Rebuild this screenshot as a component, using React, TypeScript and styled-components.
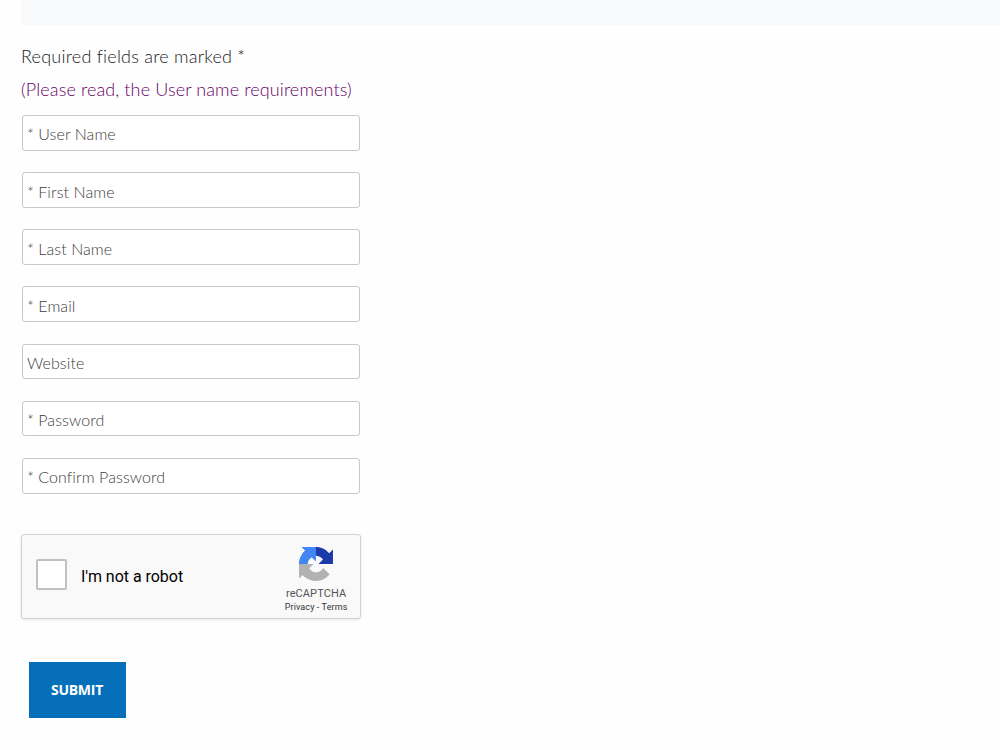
import React from "react";
import styled, { createGlobalStyle } from "styled-components";

const GlobalStyle = createGlobalStyle`
  body {
    margin: 0;
    background: #fefefe;
    font-family: Lato, "Open Sans", sans-serif;
    font-weight: 300;
    color: #3c3c3c;
  }
`;

const Page = styled.main`
  padding-left: 21px;
`;

const Banner = styled.div`
  height: 25px;
  background: #f7f9fb;
`;

const Form = styled.form`
  display: flex;
  flex-direction: column;
  align-items: flex-start;
  padding-top: 15px;
`;

const Note = styled.p<{ $accent?: boolean }>`
  margin: 0;
  height: 33px;
  line-height: 33px;
  font-size: 18px;
  white-space: nowrap;
  letter-spacing: ${(p) => (p.$accent ? "0.12px" : "0.23px")};
  color: ${(p) => (p.$accent ? "#660066" : "#1c1c1c")};
`;

const Fields = styled.div`
  display: flex;
  flex-direction: column;
  gap: 21.5px;
  padding: 9px 0 0 1px;
`;

const Field = styled.input`
  box-sizing: border-box;
  width: 338px;
  height: 35.67px;
  padding: 2.1px 4px 0;
  border: 1px solid #c8c8c8;
  border-radius: 3px;
  background: #fff;
  font: 300 16px Lato, "Open Sans", sans-serif;
  letter-spacing: 0.08px;

  &::placeholder {
    color: #404040;
    opacity: 1;
  }
`;

const Captcha = styled.div`
  box-sizing: border-box;
  display: flex;
  align-items: center;
  width: 340px;
  height: 85px;
  margin-top: 40.6px;
  padding: 0 12.6px 0 14px;
  border: 1px solid #d3d3d3;
  border-radius: 3px;
  background: #f9f9f9;
  box-shadow: 0 1px 3px rgba(0, 0, 0, 0.1);
  font-family: Roboto, sans-serif;
  font-weight: 400;
`;

const CheckBox = styled.span`
  box-sizing: border-box;
  width: 31px;
  height: 31px;
  margin-top: -4px;
  border: 2px solid #c1c1c1;
  border-radius: 2px;
  background: #fff;
`;

const CaptchaLabel = styled.span`
  flex: 1;
  padding-left: 14px;
  font-size: 16px;
  letter-spacing: -0.03px;
  color: #000;
`;

const Brand = styled.div`
  display: flex;
  flex-direction: column;
  align-items: center;
  align-self: flex-start;
  padding-top: 12px;
  color: #555;
`;

const BrandName = styled.span`
  margin-top: 6px;
  font-size: 11px;
  line-height: 14px;
  letter-spacing: 0.1px;
`;

const BrandLinks = styled.span`
  font-size: 9px;
  line-height: 13px;
  letter-spacing: 0.1px;
  color: #333;
`;

const Submit = styled.button`
  width: 97px;
  height: 56px;
  margin: 43px 0 0 8px;
  padding: 0 1px 1px 0;
  border: 0;
  background: #0570b9;
  color: #fff;
  font: 700 14px "Open Sans", sans-serif;
  letter-spacing: -0.25px;
`;

const RecaptchaLogo = () => (
  <svg width="34" height="34" viewBox="0 0 64 64">
    <path
      fill="#1c3aa9"
      d="M64 31.955l-.033-1.37V4.687l-7.16 7.16C50.948 4.674 42.033.093 32.05.093c-10.4 0-19.622 4.96-25.458 12.64l11.736 11.86a15.55 15.55 0 0 1 4.754-5.334c2.05-1.6 4.952-2.906 8.968-2.906.485 0 .86.057 1.135.163 4.976.393 9.288 3.14 11.828 7.124l-8.307 8.307L64 31.953"
    />
    <path
      fill="#4285f4"
      d="M31.862.094l-1.37.033H4.594l7.16 7.16C4.58 13.147 0 22.06 0 32.046c0 10.4 4.96 19.622 12.64 25.458L24.5 45.768a15.55 15.55 0 0 1-5.334-4.754c-1.6-2.05-2.906-4.952-2.906-8.968 0-.485.057-.86.163-1.135.393-4.976 3.14-9.288 7.124-11.828l8.307 8.307L31.86.095"
    />
    <path
      fill="#b2b2b2"
      d="M.001 32.045l.033 1.37v25.898l7.16-7.16c5.86 7.173 14.774 11.754 24.76 11.754 10.4 0 19.622-4.96 25.458-12.64l-11.736-11.86a15.55 15.55 0 0 1-4.754 5.334c-2.05 1.6-4.952 2.906-8.968 2.906-.485 0-.86-.057-1.135-.163-4.976-.393-9.288-3.14-11.828-7.124l8.307-8.307c-10.522.04-22.4.066-27.295-.005"
    />
  </svg>
);

const fields = [
  "* User Name",
  "* First Name",
  "* Last Name",
  "* Email",
  "Website",
  "* Password",
  "* Confirm Password",
];

export default function App() {
  return (
    <Page>
      <GlobalStyle />
      <Banner />
      <Form>
        <Note>Required fields are marked *</Note>
        <Note $accent>(Please read, the User name requirements)</Note>
        <Fields>
          {fields.map((label) => (
            <Field key={label} placeholder={label} />
          ))}
        </Fields>
        <Captcha>
          <CheckBox />
          <CaptchaLabel>I'm not a robot</CaptchaLabel>
          <Brand>
            <RecaptchaLogo />
            <BrandName>reCAPTCHA</BrandName>
            <BrandLinks>Privacy - Terms</BrandLinks>
          </Brand>
        </Captcha>
        <Submit type="button">SUBMIT</Submit>
      </Form>
    </Page>
  );
}
